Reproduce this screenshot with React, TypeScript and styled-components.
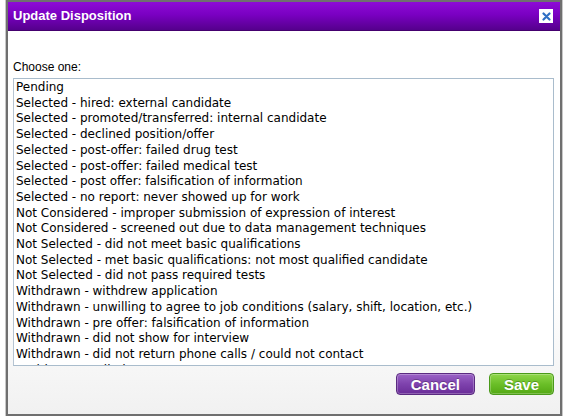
import React from 'react';
import styled, { createGlobalStyle } from 'styled-components';

const GlobalStyle = createGlobalStyle`
  html, body {
    margin: 0;
    padding: 0;
    background: #ffffff;
  }
`;

const options: string[] = [
  'Pending',
  'Selected - hired: external candidate',
  'Selected - promoted/transferred: internal candidate',
  'Selected - declined position/offer',
  'Selected - post-offer: failed drug test',
  'Selected - post-offer: failed medical test',
  'Selected - post offer: falsification of information',
  'Selected - no report: never showed up for work',
  'Not Considered - improper submission of expression of interest',
  'Not Considered - screened out due to data management techniques',
  'Not Selected - did not meet basic qualifications',
  'Not Selected - met basic qualifications: not most qualified candidate',
  'Not Selected - did not pass required tests',
  'Withdrawn - withdrew application',
  'Withdrawn - unwilling to agree to job conditions (salary, shift, location, etc.)',
  'Withdrawn - pre offer: falsification of information',
  'Withdrawn - did not show for interview',
  'Withdrawn - did not return phone calls / could not contact',
  'Position Cancelled',
];

const Page = styled.div`
  padding: 0 4px 0 6px;
  font-family: 'Liberation Sans', Arial, sans-serif;
`;

const Dialog = styled.div`
  width: 552px;
  height: 412px;
  border: 2px solid #6f6f6f;
  box-shadow: 0 0 0 1px #c8c8c8;
  display: flex;
  flex-direction: column;
  background: linear-gradient(to bottom, #ffffff 0%, #ffffff 70%, #f1f1f1 100%);
`;

const TitleBar = styled.div`
  height: 28px;
  display: flex;
  align-items: center;
  justify-content: space-between;
  padding: 0 7px 0 5px;
  background: linear-gradient(to bottom, #8d0bd6 0%, #7a00c2 45%, #55008c 100%);
  border-bottom: 1px solid #44006e;
`;

const Title = styled.h1`
  margin: 0 0 2px 0;
  font-size: 13px;
  font-weight: bold;
  color: #ffffff;
`;

const CloseButton = styled.button`
  width: 14px;
  height: 14px;
  padding: 0;
  border: none;
  background: #ffffff;
  display: flex;
  align-items: center;
  justify-content: center;
`;

const Body = styled.div`
  flex: 1;
  display: flex;
  flex-direction: column;
  padding: 29px 6px 0 5px;
`;

const Label = styled.div`
  font-size: 12px;
  color: #000000;
  margin-bottom: 4px;
`;

const ListBox = styled.div`
  height: 285px;
  border: 1px solid #a9bccc;
  border-left-color: #b6c4d2;
  overflow-y: scroll;
  padding: 1px 0 0 2px;
  background: #ffffff;

  &::-webkit-scrollbar {
    width: 8px;
  }
  &::-webkit-scrollbar-track {
    background: #fafafa;
  }
  &::-webkit-scrollbar-thumb {
    background: #cdcdcd;
    border-left: 1px solid #bdbdbd;
  }
`;

const Option = styled.div`
  font-family: 'DejaVu Sans', Verdana, sans-serif;
  font-size: 12px;
  line-height: 15.7px;
  color: #000000;
  white-space: nowrap;
`;

const Footer = styled.div`
  display: flex;
  justify-content: flex-end;
  gap: 14px;
  padding: 7px 0 0 0;
`;

const ActionButton = styled.button<{ $tone: 'purple' | 'green' }>`
  height: 22px;
  border-radius: 4px;
  border: 1px solid ${(p) => (p.$tone === 'purple' ? '#5a2a80' : '#4a9a1a')};
  background: ${(p) =>
    p.$tone === 'purple'
      ? 'linear-gradient(to bottom, #9a62c6 0%, #7e42ad 50%, #6a2d98 100%)'
      : 'linear-gradient(to bottom, #8fd64a 0%, #6bbf28 50%, #53a814 100%)'};
  color: #ffffff;
  font-family: 'Liberation Sans', Arial, sans-serif;
  font-weight: bold;
  font-size: 15px;
  padding: 0 14px;
  text-shadow: 0 -1px 0 rgba(0, 0, 0, 0.25);
  box-shadow: inset 0 0 0 1px rgba(255, 255, 255, 0.25);
`;

const App: React.FC = () => {
  return (
    <>
      <GlobalStyle />
      <Page>
        <Dialog>
          <TitleBar>
            <Title>Update Disposition</Title>
            <CloseButton aria-label="close">
              <svg width="9" height="9" viewBox="0 0 9 9">
                <path d="M1.5 1.5 L7.5 7.5 M7.5 1.5 L1.5 7.5" stroke="#2f6fc4" strokeWidth="2.2" strokeLinecap="round" />
              </svg>
            </CloseButton>
          </TitleBar>
          <Body>
            <Label>Choose one:</Label>
            <ListBox>
              {options.map((o) => (
                <Option key={o}>{o}</Option>
              ))}
            </ListBox>
            <Footer>
              <ActionButton $tone="purple">Cancel</ActionButton>
              <ActionButton $tone="green">Save</ActionButton>
            </Footer>
          </Body>
        </Dialog>
      </Page>
    </>
  );
};

export default App;
